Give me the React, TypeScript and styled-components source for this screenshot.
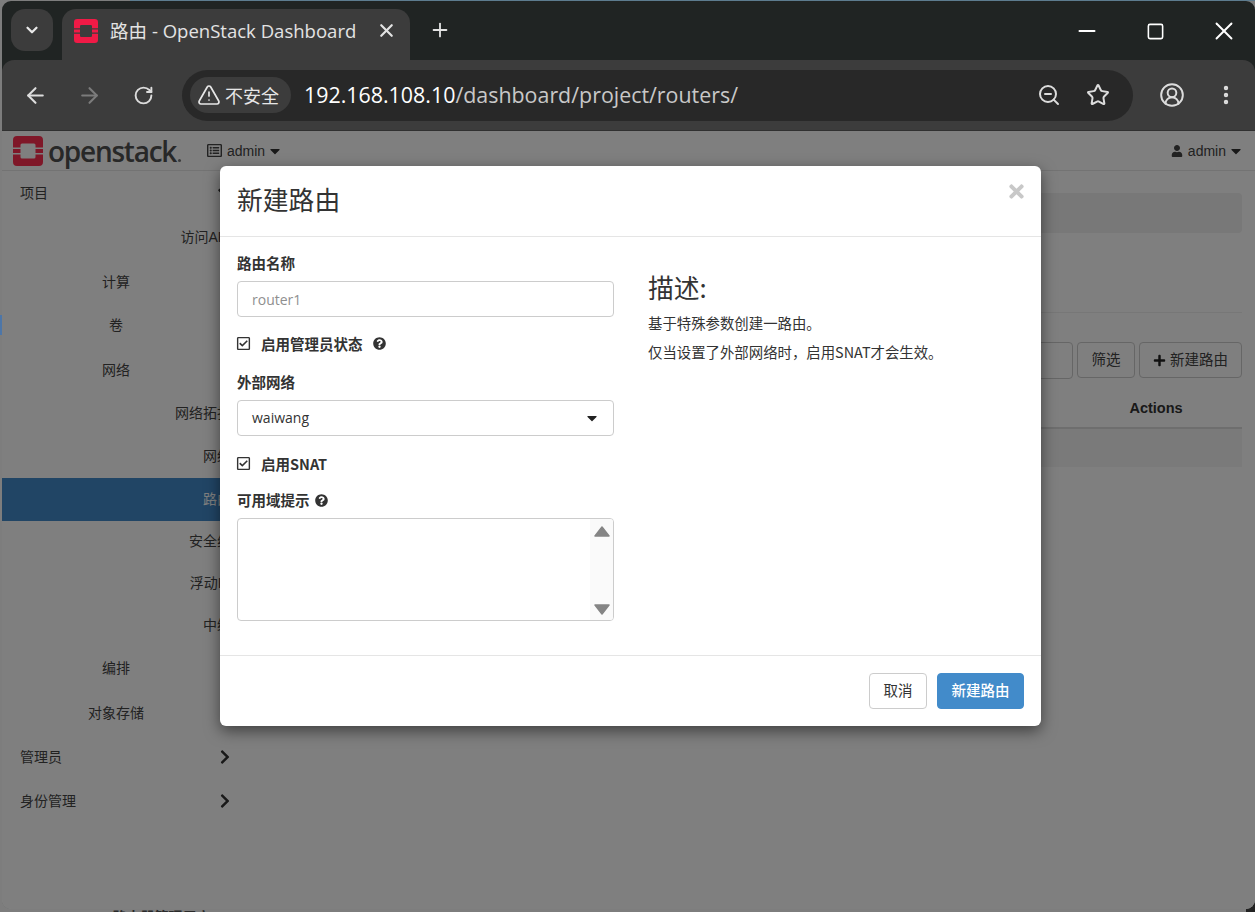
import React from "react";
import styled, { createGlobalStyle } from "styled-components";
import {
  ArrowLeft,
  ArrowRight,
  ChevronDown,
  CircleUserRound,
  EllipsisVertical,
  Minus,
  Plus,
  RotateCw,
  Square,
  Star,
  TriangleAlert,
  X,
  ZoomOut,
} from "lucide-react";
import {
  FaCaretDown,
  FaChevronDown,
  FaChevronRight,
  FaPlus,
  FaQuestionCircle,
  FaRegCheckSquare,
  FaRegListAlt,
  FaTimes,
  FaUser,
} from "react-icons/fa";

const UI_FONT = `"Open Sans", "Noto Sans CJK SC", sans-serif`;
const PAGE_FONT = `"Liberation Sans", "Noto Sans CJK SC", sans-serif`;

const Global = createGlobalStyle`
  html, body { margin: 0; padding: 0; height: 100%; overflow: hidden; }
  * { box-sizing: border-box; }
`;

const Desktop = styled.div`
  width: 1255px;
  height: 912px;
  overflow: hidden;
  display: flex;
  flex-direction: column;
  padding: 1px 0 0 2px;
  background:
    linear-gradient(#5d7c8f, #5d7c8f) 130px 0 / 100% 1px no-repeat,
    linear-gradient(#4d76a8, #4d76a8) 0 315px / 2px 20px no-repeat,
    linear-gradient(#222, #222) 100% 100% / 9px 12px no-repeat,
    #7d7d7d;
`;

const Window = styled.div`
  height: 908px;
  flex: none;
  display: flex;
  flex-direction: column;
  border-radius: 9px;
  overflow: hidden;
  background: #202423;
`;

const PeekStrip = styled.div`
  height: 3px;
  overflow: hidden;
  padding-left: 102px;
  font: bold 14px/16px ${PAGE_FONT};
  color: #2a2a2a;
`;

/* ---- browser chrome ---- */

const TabStrip = styled.div`
  height: 59px;
  flex: none;
  display: flex;
  align-items: flex-start;
  padding: 8px 0 0 9px;
  color: #fff;
`;

const TabSearch = styled.div`
  width: 42px;
  height: 42px;
  border-radius: 14px;
  background: #3c3c3c;
  display: flex;
  align-items: center;
  justify-content: center;
  color: #e8e8e8;
`;

const Tab = styled.div`
  width: 348px;
  height: 51px;
  margin-left: 9px;
  padding: 0 13px 8px 12px;
  border-radius: 14px 14px 0 0;
  background: #3c3c3c;
  display: flex;
  align-items: center;
  color: #e3e3e3;
`;

const TabTitle = styled.span`
  margin-left: 12px;
  flex: 1;
  font: 400 18.55px/24px ${UI_FONT};
  white-space: nowrap;
`;

const NewTab = styled.div`
  width: 60px;
  height: 42px;
  display: flex;
  align-items: center;
  justify-content: center;
  color: #e3e3e3;
`;

const WindowControls = styled.div`
  margin-left: auto;
  margin-right: -3px;
  display: flex;
  height: 44px;
`;

const WindowButton = styled.div`
  width: 68.5px;
  display: flex;
  align-items: center;
  justify-content: center;
  color: #fff;
`;

const Toolbar = styled.div`
  height: 71px;
  flex: none;
  display: flex;
  align-items: center;
  padding: 0 0 0 6px;
  background: #3c3c3c;
  border-radius: 12px 12px 0 0;
  border-bottom: 1px solid #303030;
`;

const NavIcon = styled.div<{ $dim?: boolean; $w?: number }>`
  width: ${(p) => p.$w ?? 54}px;
  flex: none;
  display: flex;
  align-items: center;
  justify-content: center;
  color: ${(p) => (p.$dim ? "#7b7b7b" : "#dcdcdc")};
`;

const Omnibox = styled.div`
  width: 951px;
  height: 51px;
  margin-left: 12px;
  flex: none;
  display: flex;
  align-items: center;
  padding: 0 0 0 8px;
  border-radius: 26px;
  background: #282828;
`;

const SecurityChip = styled.div`
  width: 101px;
  height: 36px;
  flex: none;
  display: flex;
  align-items: center;
  gap: 4px;
  padding: 0 0 1px 7px;
  border-radius: 18px;
  background: #3c3c3c;
  color: #e6e6e6;
  font: 400 18px/24px "Noto Sans CJK SC", sans-serif;
`;

const Url = styled.div`
  margin-left: 13px;
  flex: 1;
  font: 400 21.4px/28px ${UI_FONT};
  color: #c8c8c8;
  white-space: nowrap;
`;

const UrlHost = styled.span`
  color: #fff;
`;

const OmniIcons = styled.div`
  display: flex;
  margin-right: 11px;
`;

const ProfileIcons = styled.div`
  display: flex;
  margin-left: 12px;
`;

/* ---- page ---- */

const Page = styled.div`
  position: relative;
  flex: 1;
  display: flex;
  flex-direction: column;
  background: #fff;
  color: #333;
  font: 400 14px/20px ${PAGE_FONT};
  overflow: hidden;
`;

const TopNav = styled.div`
  height: 40px;
  flex: none;
  display: flex;
  align-items: center;
  padding: 0 11px 0 11px;
  border-bottom: 1px solid #e7e7e7;
`;

const Brand = styled.div`
  display: flex;
  align-items: center;
  gap: 5px;
  width: 194px;
`;

const BrandWord = styled.span`
  font: 600 28px/36px "Open Sans", sans-serif;
  letter-spacing: -1.25px;
  color: #505050;
  display: flex;
  align-items: baseline;
`;

const BrandDot = styled.i`
  width: 3px;
  height: 3px;
  margin-left: 2px;
  border-radius: 50%;
  background: #777;
`;

const NavMenu = styled.div<{ $right?: boolean }>`
  display: flex;
  align-items: center;
  gap: 5px;
  color: #444;
  margin-left: ${(p) => (p.$right ? "auto" : "0")};
`;

const NavCaret = styled.span`
  display: flex;
  margin-left: -3px;
  color: #333;
`;

const Main = styled.div`
  flex: 1;
  display: flex;
  min-height: 0;
`;

const Sidebar = styled.nav`
  width: 234px;
  flex: none;
`;

const SideRow = styled.div<{ $level: number; $h: number; $active?: boolean }>`
  height: ${(p) => p.$h}px;
  display: flex;
  align-items: center;
  padding: ${(p) =>
    p.$level === 1 ? "0 3px 0 18px" : p.$level === 2 ? "0 6px 0 0" : "0 5px 2px 0"};
  justify-content: ${(p) =>
    p.$level === 1 ? "space-between" : p.$level === 2 ? "center" : "flex-end"};
  background: ${(p) => (p.$active ? "#428bca" : "transparent")};
  color: ${(p) => (p.$active ? "#fff" : "#444")};
`;

const Chevron = styled.span`
  display: flex;
  color: #333;
`;

const Content = styled.div`
  flex: 1;
  min-width: 0;
  padding: 22px 13px 0 11px;
`;

const Breadcrumb = styled.div`
  height: 40px;
  border-radius: 4px;
  background: #f0f0f0;
`;

const PageHeader = styled.div`
  height: 80px;
  border-bottom: 1px solid #eee;
`;

const TableActions = styled.div`
  margin-top: 29px;
  display: flex;
  justify-content: flex-end;
  gap: 4px;
`;

const FilterInput = styled.div`
  width: 220px;
  height: 37px;
  border: 1px solid #ccc;
  border-radius: 4px;
`;

const PageButton = styled.div<{ $w: number }>`
  width: ${(p) => p.$w}px;
  height: 36px;
  display: flex;
  align-items: center;
  justify-content: center;
  gap: 4px;
  border: 1px solid #ccc;
  border-radius: 4px;
  color: #444;
  font-size: 14.5px;
`;

const TableHead = styled.div`
  height: 50px;
  display: flex;
  justify-content: flex-end;
  align-items: center;
  padding-top: 9px;
  border-bottom: 2px solid #ddd;
`;

const ActionsCell = styled.div`
  width: 172px;
  text-align: center;
  font-weight: 700;
  font-size: 14.5px;
`;

const TableRow = styled.div`
  height: 38px;
  background: #f5f5f5;
`;

/* ---- modal ---- */

const Backdrop = styled.div`
  position: absolute;
  inset: 0;
  background: rgba(0, 0, 0, 0.5);
`;

const Modal = styled.div`
  position: absolute;
  left: 218px;
  top: 35px;
  width: 821px;
  height: 560px;
  display: flex;
  flex-direction: column;
  background: #fff;
  border-radius: 6px;
  box-shadow: 0 5px 15px rgba(0, 0, 0, 0.5);
  color: #333;
  font: 400 14px/20px ${UI_FONT};
`;

const ModalHeader = styled.div`
  height: 71px;
  flex: none;
  display: flex;
  align-items: center;
  justify-content: space-between;
  padding: 0 14px 4px 17px;
  border-bottom: 1px solid #e5e5e5;
`;

const ModalTitle = styled.h4`
  margin: 0;
  font: 400 25.8px/36px "Noto Sans CJK SC", sans-serif;
  color: #333;
`;

const CloseButton = styled.span`
  display: flex;
  margin-top: -15px;
  color: #c8c8c8;
`;

const ModalBody = styled.div`
  flex: 1;
  display: grid;
  grid-template-columns: 377px 1fr;
  column-gap: 34px;
  padding: 17px 17px 0;
`;

const FormColumn = styled.div`
  display: flex;
  flex-direction: column;
`;

const FieldLabel = styled.label`
  display: flex;
  align-items: center;
  gap: 5px;
  height: 20px;
  padding-bottom: 2px;
  margin-bottom: 7px;
  font: 700 14.5px/20px "Noto Sans CJK SC", sans-serif;
  color: #333;
`;

const TextInput = styled.input`
  width: 100%;
  height: 36px;
  padding: 0 14px;
  border: 1px solid #ccc;
  border-radius: 4px;
  outline: none;
  font: 400 14px/20px ${UI_FONT};
  &::placeholder {
    color: #8f8f8f;
    opacity: 1;
  }
`;

const CheckRow = styled.div<{ $top: number; $bottom: number }>`
  display: flex;
  align-items: center;
  height: 20px;
  padding-bottom: 1px;
  margin: ${(p) => p.$top}px 0 ${(p) => p.$bottom}px;
  font: 700 14.5px/20px "Noto Sans CJK SC", ${UI_FONT};
  color: #333;
`;

const CheckIcon = styled.span`
  display: flex;
  width: 24px;
  margin-left: -1px;
  margin-right: 1px;
  color: #333;
`;

const HelpIcon = styled.span<{ $gap?: number }>`
  display: flex;
  margin-left: ${(p) => p.$gap ?? 0}px;
  color: #333;
`;

const SelectBox = styled.div`
  height: 36px;
  display: flex;
  align-items: center;
  justify-content: space-between;
  padding: 0 13px 0 14px;
  border: 1px solid #ccc;
  border-radius: 4px;
`;

const ListBox = styled.div`
  height: 103px;
  display: flex;
  justify-content: flex-end;
  border: 1px solid #ccc;
  border-radius: 4px;
  overflow: hidden;
`;

const ScrollTrack = styled.div`
  width: 23px;
  display: flex;
  flex-direction: column;
  align-items: center;
  justify-content: space-between;
  padding: 7px 0 5px;
  background: #fafafa;
`;

const Help = styled.div`
  padding-top: 16px;
`;

const HelpTitle = styled.h3`
  margin: 0 0 9px;
  font: 400 25.8px/34px "Noto Sans CJK SC", sans-serif;
  color: #333;
`;

const HelpText = styled.p`
  margin: 0 0 9px;
  font: 400 14.4px/20px "Noto Sans CJK SC", sans-serif;
  color: #333;
`;

const ModalFooter = styled.div`
  height: 71px;
  flex: none;
  display: flex;
  justify-content: flex-end;
  align-items: flex-start;
  gap: 10px;
  padding: 17px 17px 0;
  border-top: 1px solid #e5e5e5;
`;

const FooterButton = styled.button<{ $primary?: boolean; $w: number }>`
  width: ${(p) => p.$w}px;
  height: 36px;
  padding: 0 0 2px;
  border-radius: 4px;
  border: 1px solid ${(p) => (p.$primary ? "#428bca" : "#ccc")};
  background: ${(p) => (p.$primary ? "#428bca" : "#fff")};
  color: ${(p) => (p.$primary ? "#fff" : "#333")};
  font: ${(p) => (p.$primary ? 500 : 400)} 14.5px/20px "Noto Sans CJK SC", sans-serif;
`;

/* ---- drawings ---- */

const OpenStackMark = ({ size, color }: { size: number; color: string }) => (
  <svg width={size} height={size} viewBox="0 0 30 30" style={{ flex: "none" }}>
    <path
      fill={color}
      fillRule="evenodd"
      d="M4 0H26a4 4 0 0 1 4 4V26a4 4 0 0 1-4 4H4a4 4 0 0 1-4-4V4a4 4 0 0 1 4-4Z
         M9 7.5a1.5 1.5 0 0 0-1.5 1.5V21a1.5 1.5 0 0 0 1.5 1.5H21a1.5 1.5 0 0 0 1.5-1.5V9A1.5 1.5 0 0 0 21 7.5Z
         M0 11.5H7.5V13H0Z M0 17H7.5V18.5H0Z M22.5 11.5H30V13H22.5Z M22.5 17H30V18.5H22.5Z"
    />
  </svg>
);

const ScrollArrow = ({ down }: { down?: boolean }) => (
  <svg width="16" height="11" viewBox="0 0 16 11">
    <path
      fill="#858585"
      stroke="#858585"
      strokeWidth="1.5"
      strokeLinejoin="round"
      d={down ? "M1 1H15L8 10Z" : "M8 1L15 10H1Z"}
    />
  </svg>
);

type SideItem = { label: string; level: number; h: number; active?: boolean; open?: boolean; closed?: boolean };

const sideItems: SideItem[] = [
  { label: "项目", level: 1, h: 44, open: true },
  { label: "访问API", level: 3, h: 45 },
  { label: "计算", level: 2, h: 43 },
  { label: "卷", level: 2, h: 44 },
  { label: "网络", level: 2, h: 45, open: true },
  { label: "网络拓扑", level: 3, h: 43 },
  { label: "网络", level: 3, h: 43 },
  { label: "路由", level: 3, h: 43, active: true },
  { label: "安全组", level: 3, h: 41 },
  { label: "浮动IP", level: 3, h: 43 },
  { label: "中继", level: 3, h: 41 },
  { label: "编排", level: 2, h: 44 },
  { label: "对象存储", level: 2, h: 45 },
  { label: "管理员", level: 1, h: 44, closed: true },
  { label: "身份管理", level: 1, h: 44, closed: true },
];

export default function App() {
  return (
    <Desktop>
      <Global />
      <Window>
        <TabStrip>
          <TabSearch>
            <ChevronDown size={18} strokeWidth={3} />
          </TabSearch>
          <Tab>
            <OpenStackMark size={24} color="#f01a46" />
            <TabTitle>路由 - OpenStack Dashboard</TabTitle>
            <X size={21} strokeWidth={2.5} />
          </Tab>
          <NewTab>
            <Plus size={22} strokeWidth={2} />
          </NewTab>
          <WindowControls>
            <WindowButton>
              <Minus size={26} strokeWidth={1.7} />
            </WindowButton>
            <WindowButton>
              <Square size={19} strokeWidth={2} />
            </WindowButton>
            <WindowButton>
              <X size={30} strokeWidth={1.5} />
            </WindowButton>
          </WindowControls>
        </TabStrip>
        <Toolbar>
          <NavIcon>
            <ArrowLeft size={25} strokeWidth={2} />
          </NavIcon>
          <NavIcon $dim>
            <ArrowRight size={25} strokeWidth={2} />
          </NavIcon>
          <NavIcon>
            <RotateCw size={21} strokeWidth={2.2} />
          </NavIcon>
          <Omnibox>
            <SecurityChip>
              <TriangleAlert size={24} strokeWidth={1.7} />
              不安全
            </SecurityChip>
            <Url>
              <UrlHost>192.168.108.10</UrlHost>/dashboard/project/routers/
            </Url>
            <OmniIcons>
              <NavIcon $w={49}>
                <ZoomOut size={24} strokeWidth={2} />
              </NavIcon>
              <NavIcon $w={49}>
                <Star size={24} strokeWidth={2} />
              </NavIcon>
            </OmniIcons>
          </Omnibox>
          <ProfileIcons>
            <NavIcon>
              <CircleUserRound size={26} strokeWidth={1.8} />
            </NavIcon>
            <NavIcon>
              <EllipsisVertical size={24} strokeWidth={2.4} />
            </NavIcon>
          </ProfileIcons>
        </Toolbar>
        <Page>
          <TopNav>
            <Brand>
              <OpenStackMark size={30} color="#ff2f50" />
              <BrandWord>
                openstack
                <BrandDot />
              </BrandWord>
            </Brand>
            <NavMenu>
              <FaRegListAlt size={15} />
              admin
              <NavCaret>
                <FaCaretDown size={16} />
              </NavCaret>
            </NavMenu>
            <NavMenu $right>
              <FaUser size={12} />
              admin
              <NavCaret>
                <FaCaretDown size={16} />
              </NavCaret>
            </NavMenu>
          </TopNav>
          <Main>
            <Sidebar>
              {sideItems.map((item, i) => (
                <SideRow key={i} $level={item.level} $h={item.h} $active={item.active}>
                  {item.label}
                  {item.open && item.level === 1 && (
                    <Chevron>
                      <FaChevronDown size={16} />
                    </Chevron>
                  )}
                  {item.closed && (
                    <Chevron>
                      <FaChevronRight size={16} />
                    </Chevron>
                  )}
                </SideRow>
              ))}
            </Sidebar>
            <Content>
              <Breadcrumb />
              <PageHeader />
              <TableActions>
                <FilterInput />
                <PageButton $w={58}>筛选</PageButton>
                <PageButton $w={103}>
                  <FaPlus size={13} color="#222" />
                  新建路由
                </PageButton>
              </TableActions>
              <TableHead>
                <ActionsCell>Actions</ActionsCell>
              </TableHead>
              <TableRow />
            </Content>
          </Main>
          <Backdrop />
          <Modal>
            <ModalHeader>
              <ModalTitle>新建路由</ModalTitle>
              <CloseButton>
                <FaTimes size={21} />
              </CloseButton>
            </ModalHeader>
            <ModalBody>
              <FormColumn>
                <FieldLabel>路由名称</FieldLabel>
                <TextInput placeholder="router1" readOnly />
                <CheckRow $top={17} $bottom={19}>
                  <CheckIcon>
                    <FaRegCheckSquare size={15} />
                  </CheckIcon>
                  启用管理员状态
                  <HelpIcon $gap={10}>
                    <FaQuestionCircle size={13} />
                  </HelpIcon>
                </CheckRow>
                <FieldLabel>外部网络</FieldLabel>
                <SelectBox>
                  waiwang
                  <FaCaretDown size={16} color="#222" />
                </SelectBox>
                <CheckRow $top={18} $bottom={17}>
                  <CheckIcon>
                    <FaRegCheckSquare size={15} />
                  </CheckIcon>
                  启用SNAT
                </CheckRow>
                <FieldLabel>
                  可用域提示
                  <HelpIcon>
                    <FaQuestionCircle size={13} />
                  </HelpIcon>
                </FieldLabel>
                <ListBox>
                  <ScrollTrack>
                    <ScrollArrow />
                    <ScrollArrow down />
                  </ScrollTrack>
                </ListBox>
              </FormColumn>
              <Help>
                <HelpTitle>描述:</HelpTitle>
                <HelpText>基于特殊参数创建一路由。</HelpText>
                <HelpText>仅当设置了外部网络时，启用SNAT才会生效。</HelpText>
              </Help>
            </ModalBody>
            <ModalFooter>
              <FooterButton $w={58}>取消</FooterButton>
              <FooterButton $w={87} $primary>
                新建路由
              </FooterButton>
            </ModalFooter>
          </Modal>
        </Page>
      </Window>
      <PeekStrip>› 路由器管理用户</PeekStrip>
    </Desktop>
  );
}
